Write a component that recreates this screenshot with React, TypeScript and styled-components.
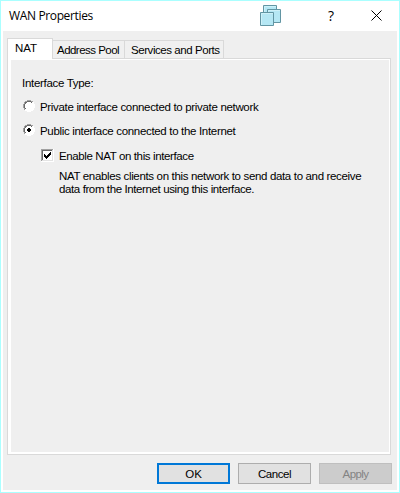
import React from "react";
import styled, { createGlobalStyle } from "styled-components";

const GlobalStyle = createGlobalStyle`
  *, *::before, *::after { box-sizing: border-box; }
  body { margin: 0; background: #fff; }
`;

const Dialog = styled.div`
  width: 400px;
  height: 493px;
  display: flex;
  flex-direction: column;
  border: 1px solid #aaffff;
  background: #fff;
  color: #000;
  font: 11.5px/13px "Liberation Sans", Arial, sans-serif;
  white-space: nowrap;
`;

const TitleBar = styled.header`
  height: 30px;
  flex: none;
  display: flex;
  align-items: center;
  padding: 0 17px 1px 8px;
`;

const Title = styled.h1`
  flex: 1;
  margin: 0;
  font: 12px/14px "Open Sans", "Noto Sans", sans-serif;
  letter-spacing: -0.36px;
`;

const CascadeIcon = styled.svg`
  width: 22px;
  height: 22px;
  margin: 1px 44px 0 0;
`;

const HelpButton = styled.button`
  width: 10px;
  margin-right: 35px;
  padding: 0;
  border: 0;
  background: none;
  color: #000;
  font: 500 14px/14px "Open Sans", sans-serif;
`;

const CloseButton = styled.button`
  display: flex;
  padding: 0;
  border: 0;
  background: none;
`;

const Body = styled.main`
  flex: 1;
  display: flex;
  flex-direction: column;
  margin: 0 2px 2px;
  padding: 7px 5px 6px 4px;
  background: #efefef;
`;

const TabStrip = styled.div`
  display: flex;
  align-items: flex-end;
  height: 20px;
`;

const Tab = styled.button<{ $width: number; $inset: number; $tracking: number; $active?: boolean }>`
  width: ${(p) => p.$width}px;
  height: ${(p) => (p.$active ? 21 : 18)}px;
  margin-bottom: ${(p) => (p.$active ? -1 : 0)}px;
  padding: 3px 0 0 ${(p) => p.$inset}px;
  border: 1px solid #d9d9d9;
  border-bottom: 0;
  border-left-width: ${(p) => (p.$active ? 1 : 0)}px;
  background: ${(p) => (p.$active ? "#fff" : "#f0f0f0")};
  display: flex;
  color: #000;
  font: inherit;
  letter-spacing: ${(p) => p.$tracking}px;
  z-index: ${(p) => (p.$active ? 1 : 0)};
`;

const Panel = styled.section`
  height: 397px;
  margin-right: 1px;
  border: 1px solid #d9d9d9;
  background: #efefef;
  box-shadow: inset 3px 0 #fff, inset 0 1px #fff, inset -1px -2px #fff;
  padding: 18px 0 0 14px;
`;

const Caption = styled.div`
  letter-spacing: -0.3px;
  margin-bottom: 11px;
`;

const RadioRow = styled.div`
  display: flex;
  gap: 5px;
  height: 13px;
  margin: 0 0 11px 1px;
  letter-spacing: -0.325px;
`;

const CheckRow = styled.div`
  display: flex;
  gap: 5px;
  height: 13px;
  margin: 12px 0 7px 19px;
  letter-spacing: -0.38px;
`;

const Glyph = styled.svg`
  display: block;
  flex: none;
  margin-top: -1px;
`;

const Help = styled.p<{ $tracking: number }>`
  margin: 0 0 0 37px;
  letter-spacing: ${(p) => p.$tracking}px;
`;

const Actions = styled.footer`
  display: flex;
  justify-content: flex-end;
  gap: 8px;
  margin-top: 8px;
`;

const ActionButton = styled.button<{ $primary?: boolean; $tracking: number }>`
  width: 73px;
  height: 21px;
  padding: 1px 0 0;
  border: ${(p) => (p.$primary ? "2px solid #0078d7" : "1px solid #adadad")};
  background: #e1e1e1;
  color: #000;
  font: inherit;
  letter-spacing: ${(p) => p.$tracking}px;
  &:disabled {
    border-color: #bfbfbf;
    background: #ccc;
    color: #838383;
  }
`;

const Radio = ({ checked }: { checked?: boolean }) => (
  <Glyph width="12" height="12" shapeRendering="crispEdges">
    <path d="M4 1h4v1h2v2h1v4h-1v2H8v1H4v-1H2V8H1V4h1V2h2z" fill="#fff" />
    <path d="M4 0h4v1H4zM2 1h2v1H2zM8 1h2v1H8zM1 2h1v2H1zM0 4h1v4H0zM1 8h1v2H1z" fill="#a0a0a0" />
    <path d="M4 1h4v1H4zM2 2h2v1H2zM8 2h1v1H8zM2 3h1v1H2zM1 4h1v4H1zM2 8h1v1H2z" fill="#696969" />
    <path d="M10 2h1v2h-1zM11 4h1v4h-1zM10 8h1v2h-1zM8 10h2v1H8zM2 10h2v1H2zM4 11h4v1H4z" fill="#fff" />
    {checked && <path d="M5 4h2v1h1v2H7v1H5V7H4V5h1z" fill="#000" />}
  </Glyph>
);

const Checkbox = () => (
  <Glyph width="13" height="13" shapeRendering="crispEdges">
    <path d="M0 0h13v13H0z" fill="#fff" />
    <path d="M0 0h12v1H1v11H0z" fill="#a0a0a0" />
    <path d="M1 1h10v1H2v9H1z" fill="#696969" />
    <path d="M11 1h1v11H1v-1h10z" fill="#e3e3e3" />
    <path d="M3 5h1v1h1v1h1V6h1V5h1V4h1V3h1v3H9v1H8v1H7v1H6v1H5V9H4V8H3z" fill="#000" />
  </Glyph>
);

const Pane = ({ x, y }: { x: number; y: number }) => (
  <g transform={`translate(${x} ${y})`}>
    <path d="M.5.5h13v13H.5z" fill="#b5e7f4" stroke="#6295a3" />
    <path d="M1.5 13V1.5H13" fill="none" stroke="#cdf0f8" />
  </g>
);

export default function App() {
  return (
    <>
      <GlobalStyle />
      <Dialog role="dialog">
        <TitleBar>
          <Title>WAN Properties</Title>
          <CascadeIcon viewBox="0 0 22 22">
            <Pane x={3} y={0} />
            <Pane x={7} y={4} />
            <Pane x={0} y={7} />
          </CascadeIcon>
          <HelpButton>?</HelpButton>
          <CloseButton aria-label="Close">
            <svg width="11" height="11">
              <path d="M.5.5l10 10M10.5.5l-10 10" stroke="#000" />
            </svg>
          </CloseButton>
        </TitleBar>
        <Body>
          <TabStrip>
            <Tab $width={46} $inset={7} $tracking={0} $active>NAT</Tab>
            <Tab $width={72} $inset={4} $tracking={-0.53}>Address Pool</Tab>
            <Tab $width={99} $inset={6} $tracking={-0.44}>Services and Ports</Tab>
          </TabStrip>
          <Panel>
            <Caption>Interface Type:</Caption>
            <RadioRow><Radio />Private interface connected to private network</RadioRow>
            <RadioRow><Radio checked />Public interface connected to the Internet</RadioRow>
            <CheckRow><Checkbox />Enable NAT on this interface</CheckRow>
            <Help $tracking={-0.34}>NAT enables clients on this network to send data to and receive</Help>
            <Help $tracking={-0.39}>data from the Internet using this interface.</Help>
          </Panel>
          <Actions>
            <ActionButton $primary $tracking={0}>OK</ActionButton>
            <ActionButton $tracking={-0.47}>Cancel</ActionButton>
            <ActionButton $tracking={-0.6} disabled>Apply</ActionButton>
          </Actions>
        </Body>
      </Dialog>
    </>
  );
}
